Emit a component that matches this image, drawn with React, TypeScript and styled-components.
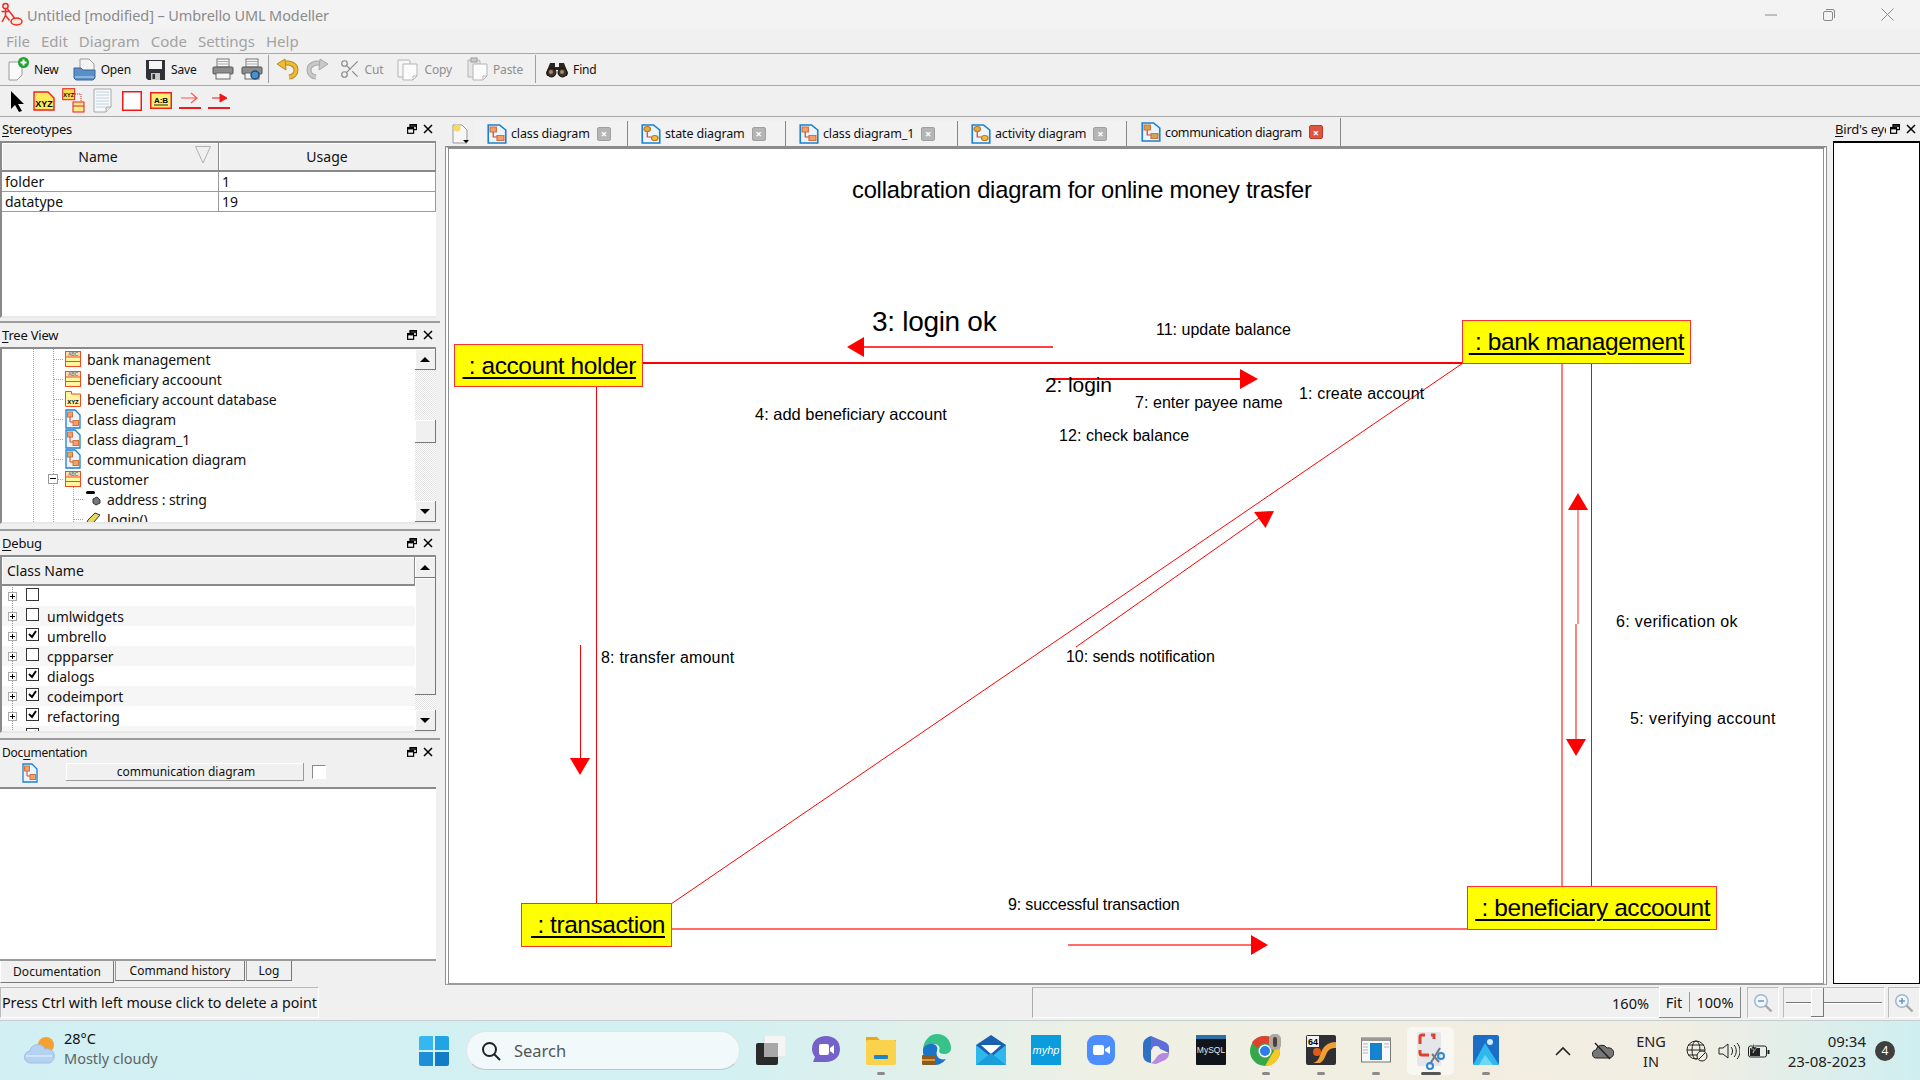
import React, { ReactNode } from "react";
import styled, { createGlobalStyle } from "styled-components";
import { Scissors } from "lucide-react";

const UI_FONT = `"Noto Sans", "Liberation Sans", sans-serif`;
const CANVAS_FONT = `"Liberation Sans", Arial, sans-serif`;

// page coordinates of the canvas' top left corner, the diagram below is noted in page pixels
const OX = 449;
const OY = 149;

const GlobalStyle = createGlobalStyle`
  html, body { margin: 0; padding: 0; background: #f0f0f0; }
  * { box-sizing: border-box; }
`;

const Screen = styled.div`
  width: 1920px;
  height: 1080px;
  overflow: hidden;
  display: flex;
  flex-direction: column;
  font-family: ${UI_FONT};
  font-size: 14px;
  color: #111;
  background: #f0f0f0;
`;

/* ---- window chrome ---- */

const TitleBar = styled.div`
  height: 29px;
  display: flex;
  align-items: center;
  padding-left: 1px;
  background: #f3f3f3;
  color: #8b8b8b;
  font-size: 14.5px;
  letter-spacing: -0.1px;
`;

const TitleText = styled.span`
  margin-left: 4px;
`;

const WindowButtons = styled.div`
  margin-left: auto;
  padding-right: 4px;
  display: flex;
  color: #8a8a8a;
`;

const WindowButton = styled.div`
  width: 58px;
  height: 29px;
  display: flex;
  align-items: center;
  justify-content: center;
`;

const MenuBar = styled.div`
  height: 25px;
  display: flex;
  align-items: center;
  padding-left: 6px;
  gap: 11px;
  border-bottom: 1px solid #a8a8a8;
  color: #a2a2a2;
  font-size: 15px;
`;

const ToolbarRow = styled.div`
  height: 32px;
  display: flex;
  align-items: center;
  padding-left: 8px;
  border-bottom: 1px solid #a8a8a8;
`;

const ToolButton = styled.div<{ $gap?: number; $off?: boolean; $inset?: number; $iconGap?: number }>`
  display: flex;
  align-items: center;
  gap: ${(p) => p.$iconGap ?? 5}px;
  margin-left: ${(p) => p.$inset ?? 0}px;
  margin-right: ${(p) => p.$gap ?? 14}px;
  font-size: 12px;
  letter-spacing: -0.15px;
  color: ${(p) => (p.$off ? "#8f8f8f" : "#111")};
`;

const ToolSep = styled.div`
  width: 1px;
  height: 28px;
  background: #a0a0a0;
  margin: 0 7px 0 0;
`;

const ModeIcon = styled.div<{ $w: number }>`
  width: ${(p) => p.$w}px;
  height: 24px;
  display: flex;
  align-items: center;
  justify-content: center;
  flex: none;
`;

/* ---- workspace ---- */

const Workspace = styled.div`
  height: 870px;
  display: flex;
`;

const LeftColumn = styled.div`
  width: 440px;
  flex: none;
  display: flex;
  flex-direction: column;
`;

const Panel = styled.section<{ $h: number; $pad?: number }>`
  height: ${(p) => p.$h}px;
  padding-bottom: ${(p) => p.$pad ?? 0}px;
  flex: none;
  display: flex;
  flex-direction: column;
  overflow: hidden;
`;

const PanelTitle = styled.div<{ $size?: number }>`
  height: 24px;
  flex: none;
  display: flex;
  align-items: center;
  padding: 0 7px 0 2px;
  font-size: ${(p) => p.$size ?? 13}px;
  letter-spacing: -0.2px;
  color: #111;
  u { text-underline-offset: 2px; }
`;

const PanelButtons = styled.div`
  margin-left: auto;
  display: flex;
  align-items: center;
  gap: 6px;
`;

const PanelFrame = styled.div`
  flex: 1;
  min-height: 0;
  margin-right: 4px;
  display: flex;
  background: #fff;
  border-top: 2px solid #8a8a8a;
  border-left: 2px solid #8a8a8a;
  border-bottom: 2px solid #e8e8e8;
  overflow: hidden;
  position: relative;
`;

const Sep = styled.div`
  height: 2px;
  flex: none;
  background: #9c9c9c;
`;

const HeaderGrid = styled.div`
  display: grid;
  grid-template-columns: 217px 1fr;
  width: 100%;
  align-content: start;
`;

const HeaderCell = styled.div<{ $sorted?: boolean }>`
  height: 29px;
  display: flex;
  align-items: center;
  justify-content: center;
  padding-right: ${(p) => (p.$sorted ? 24 : 0)}px;
  position: relative;
  background: #f0f0f0;
  border-right: 1px solid #8a8a8a;
  border-bottom: 2px solid #8a8a8a;
  box-shadow: inset 1px 1px 0 #fff;
  font-size: 14px;
`;

const SortMark = styled.svg`
  position: absolute;
  right: 7px;
  top: 3px;
`;

const DataCell = styled.div`
  height: 20px;
  padding-left: 3px;
  display: flex;
  align-items: center;
  border-right: 1px solid #9a9a9a;
  border-bottom: 1px solid #9a9a9a;
  font-size: 14px;
`;

const ScrollBar = styled.div`
  width: 21px;
  flex: none;
  display: flex;
  flex-direction: column;
  background: repeating-conic-gradient(#fff 0 25%, #e2e2e2 0 50%) 0 0 / 2px 2px;
`;

const ScrollButton = styled.div<{ $down?: boolean }>`
  height: 21px;
  flex: none;
  display: flex;
  align-items: center;
  justify-content: center;
  background: #f0f0f0;
  border-right: 1px solid #777;
  border-bottom: 1px solid #777;
  box-shadow: inset 1px 1px 0 #fff;
  &::before {
    content: "";
    border-left: 5px solid transparent;
    border-right: 5px solid transparent;
    ${(p) => (p.$down ? "border-top: 5px solid #000;" : "border-bottom: 5px solid #000;")}
  }
`;

const ScrollThumb = styled.div<{ $h: number }>`
  height: ${(p) => p.$h}px;
  flex: none;
  background: #f0f0f0;
  border-right: 1px solid #777;
  border-bottom: 1px solid #777;
  box-shadow: inset 1px 1px 0 #fff;
`;

const ScrollGap = styled.div<{ $h?: number }>`
  ${(p) => (p.$h !== undefined ? `height: ${p.$h}px; flex: none;` : "flex: 1;")}
`;

const TreeBody = styled.div`
  flex: 1;
  min-width: 0;
  overflow: hidden;
  position: relative;
`;

const VGuide = styled.div<{ $x: number; $top?: number }>`
  position: absolute;
  left: ${(p) => p.$x}px;
  top: ${(p) => p.$top ?? 0}px;
  bottom: 0;
  border-left: 1px dotted #a0a0a0;
`;

const TreeRow = styled.div<{ $depth: number }>`
  height: 20px;
  display: flex;
  align-items: center;
  gap: 6px;
  padding-left: ${(p) => 63 + p.$depth * 20}px;
  font-size: 14px;
  letter-spacing: -0.1px;
  white-space: nowrap;
  position: relative;
  &::before {
    content: "";
    position: absolute;
    left: ${(p) => 51 + p.$depth * 20}px;
    top: 10px;
    width: 10px;
    border-top: 1px dotted #a0a0a0;
  }
`;

const Expander = styled.div`
  position: absolute;
  width: 10px;
  height: 10px;
  left: 46px;
  top: 5px;
  background: #fff;
  border: 1px solid #999;
  z-index: 1;
  &::after {
    content: "";
    position: absolute;
    left: 1px;
    right: 1px;
    top: 3px;
    border-top: 1px solid #000;
  }
`;

const ClassColumn = styled.div`
  flex: 1;
  min-width: 0;
  display: flex;
  flex-direction: column;
  overflow: hidden;
`;

const ClassHeader = styled.div`
  height: 29px;
  flex: none;
  display: flex;
  align-items: center;
  padding-left: 5px;
  background: #f0f0f0;
  border-right: 1px solid #8a8a8a;
  border-bottom: 2px solid #8a8a8a;
  box-shadow: inset 1px 1px 0 #fff;
  font-size: 14px;
`;

const ClassRow = styled.div<{ $shade: boolean }>`
  height: 20px;
  flex: none;
  position: relative;
  display: flex;
  align-items: center;
  padding-left: 24px;
  gap: 8px;
  background: ${(p) => (p.$shade ? "#f6f6f6" : "#fff")};
  font-size: 14px;
  &::before {
    content: "";
    position: absolute;
    left: 10px;
    top: -1px;
    bottom: 0;
    border-left: 1px dotted #999;
  }
`;

const PlusBox = styled.div`
  position: absolute;
  left: 6px;
  top: 6px;
  width: 9px;
  height: 9px;
  background: #fff;
  border: 1px solid #aaa;
  z-index: 1;
  &::before, &::after {
    content: "";
    position: absolute;
    background: #000;
  }
  &::before { left: 1px; right: 1px; top: 3px; height: 1px; }
  &::after { top: 1px; bottom: 1px; left: 3px; width: 1px; }
`;

const CheckBox = styled.div`
  width: 13px;
  height: 13px;
  flex: none;
  background: #fff;
  border: 1px solid #333;
  margin-top: -3px;
  display: flex;
  align-items: center;
  justify-content: center;
`;

const DocHeader = styled.div`
  height: 24px;
  margin-top: -1px;
  flex: none;
  display: flex;
  align-items: flex-start;
  padding-left: 22px;
`;

const DocName = styled.div`
  width: 238px;
  height: 18px;
  margin-left: 28px;
  padding-left: 3px;
  display: flex;
  align-items: center;
  justify-content: center;
  font-size: 12px;
  background: #f0f0f0;
  border-right: 1px solid #999;
  border-bottom: 1px solid #999;
  box-shadow: inset 1px 1px 0 #fff;
`;

const DocCheck = styled.div`
  width: 14px;
  height: 14px;
  margin: 2px 0 0 8px;
  background: #fff;
  border: 1px solid #888;
  border-right-color: #fff;
  border-bottom-color: #fff;
`;

const DocArea = styled.div`
  height: 174px;
  flex: none;
  margin-right: 4px;
  background: #fff;
  border-top: 2px solid #8a8a8a;
  border-bottom: 2px solid #9a9a9a;
`;

const BottomTabs = styled.div`
  height: 23px;
  flex: none;
  display: flex;
`;

const BottomTab = styled.div<{ $w: number; $active?: boolean }>`
  width: ${(p) => p.$w}px;
  height: ${(p) => (p.$active ? 22 : 20)}px;
  margin-right: 1px;
  display: flex;
  align-items: center;
  justify-content: center;
  font-size: 12px;
  background: #f0f0f0;
  border-right: 1px solid #777;
  border-bottom: 1px solid #777;
  border-left: 1px solid ${(p) => (p.$active ? "#fff" : "#999")};
`;

const CenterColumn = styled.div`
  width: 1386px;
  margin-left: 4px;
  flex: none;
  display: flex;
  flex-direction: column;
`;

const TabStrip = styled.div`
  height: 29px;
  flex: none;
  display: flex;
  align-items: flex-end;
  padding-left: 3px;
`;

const NewTab = styled.div`
  width: 28px;
  height: 25px;
  flex: none;
  display: flex;
  align-items: center;
  justify-content: center;
`;

const Tab = styled.div<{ $w: number; $active?: boolean }>`
  width: ${(p) => p.$w}px;
  height: ${(p) => (p.$active ? 28 : 25)}px;
  flex: none;
  display: flex;
  align-items: center;
  padding-left: ${(p) => (p.$active ? 13 : 12)}px;
  gap: 4px;
  font-size: 12.5px;
  letter-spacing: ${(p) => (p.$active ? -0.35 : -0.15)}px;
  white-space: nowrap;
  background: ${(p) => (p.$active ? "#f0f0f0" : "#f2f2f2")};
  border-right: 1px solid #888;
  margin-right: 1px;
`;

const TabClose = styled.div<{ $active?: boolean }>`
  width: 14px;
  height: 14px;
  flex: none;
  margin-left: 3px;
  border-radius: 2px;
  display: flex;
  align-items: center;
  justify-content: center;
  color: #fff;
  font-size: 11px;
  font-weight: 700;
  line-height: 1;
  background: ${(p) => (p.$active ? "#e0533f" : "#b5b5b5")};
  border: 1px solid ${(p) => (p.$active ? "#c03c2a" : "#a0a0a0")};
`;

const CanvasFrame = styled.div`
  flex: 1;
  min-height: 0;
  margin-bottom: 2px;
  margin-left: 1px;
  margin-right: 3px;
  border-top: 3px solid #8c8c8c;
  border-left: 4px double #8f8f8f;
  border-right: 4px double #8f8f8f;
  border-bottom: 2px solid #9a9a9a;
  background: #fff;
  position: relative;
  overflow: hidden;
`;

const Wires = styled.svg`
  position: absolute;
  left: 0;
  top: 0;
`;

const DiagramObject = styled.div<{ $x: number; $y: number; $w: number; $h: number; $size: number; $ls: number }>`
  position: absolute;
  left: ${(p) => p.$x - OX}px;
  top: ${(p) => p.$y - OY}px;
  width: ${(p) => p.$w}px;
  height: ${(p) => p.$h}px;
  display: flex;
  align-items: center;
  justify-content: flex-end;
  padding-right: 6px;
  background: #ffff00;
  border: 1.5px solid #ff3030;
  font-family: ${CANVAS_FONT};
  font-size: ${(p) => p.$size}px;
  letter-spacing: ${(p) => p.$ls}px;
  color: #000;
  white-space: pre;
  text-decoration: underline;
  text-decoration-thickness: 2px;
  text-underline-offset: 3px;
`;

const DiagramLabel = styled.div<{ $x: number; $y: number; $size: number; $ls: number }>`
  position: absolute;
  left: ${(p) => p.$x - OX}px;
  top: ${(p) => p.$y - OY}px;
  transform: translateY(-50%);
  font-family: ${CANVAS_FONT};
  font-size: ${(p) => p.$size}px;
  letter-spacing: ${(p) => p.$ls}px;
  color: #000;
  white-space: nowrap;
`;

const BirdColumn = styled.div`
  flex: 1;
  min-width: 0;
  margin-left: 3px;
  display: flex;
  flex-direction: column;
`;

const BirdTitle = styled(PanelTitle)`
  padding: 0 4px 0 2px;
`;

const BirdName = styled.span`
  width: 51px;
  overflow: hidden;
  white-space: nowrap;
`;

const BirdBody = styled.div`
  flex: 1;
  background: #fff;
  border: 1px solid #000;
  border-top-width: 2px;
  margin-bottom: 3px;
`;

const StatusRow = styled.div`
  height: 33px;
  display: flex;
  align-items: stretch;
  padding-bottom: 2px;
`;

const StatusMessage = styled.div`
  width: 319px;
  flex: none;
  display: flex;
  align-items: center;
  padding-left: 1px;
  font-size: 14.3px;
  letter-spacing: -0.05px;
  white-space: nowrap;
  border-left: 1px solid #bbb;
  border-top: 1px solid #bbb;
  border-right: 1px solid #fff;
  border-bottom: 1px solid #fff;
`;

const ZoomBox = styled.div`
  flex: 1;
  min-width: 0;
  margin-left: 713px;
  display: flex;
  align-items: center;
  justify-content: flex-end;
  padding-right: 10px;
  font-size: 14.5px;
  border-left: 1px solid #aaa;
  border-top: 1px solid #bbb;
  border-bottom: 1px solid #fff;
`;

const ZoomButtons = styled.div`
  width: 82px;
  flex: none;
  display: flex;
  align-items: center;
  font-size: 14.5px;
  background: #f0f0f0;
  border-right: 1px solid #888;
  border-bottom: 1px solid #888;
  box-shadow: inset 1px 1px 0 #fff;
`;

const ZoomButton = styled.div<{ $w: number; $line?: boolean }>`
  width: ${(p) => p.$w}px;
  height: 20px;
  display: flex;
  align-items: center;
  justify-content: center;
  ${(p) => (p.$line ? "border-right: 1px solid #999;" : "")}
`;

const ZoomIconCell = styled.div<{ $inset: number }>`
  width: 32px;
  margin-left: ${(p) => p.$inset}px;
  flex: none;
  display: flex;
  align-items: center;
  justify-content: center;
  border-left: 1px solid #bbb;
  border-top: 1px solid #bbb;
  border-right: 1px solid #fff;
  border-bottom: 1px solid #fff;
`;

const SliderCell = styled.div`
  width: 102px;
  margin-left: 4px;
  flex: none;
  display: flex;
  align-items: center;
  position: relative;
  padding: 0 2px;
  border-left: 1px solid #bbb;
  border-top: 1px solid #bbb;
  border-right: 1px solid #fff;
  border-bottom: 1px solid #fff;
`;

const SliderLine = styled.div`
  width: 100%;
  height: 2px;
  background: #777;
  border-bottom: 1px solid #fff;
`;

const SliderThumb = styled.div`
  position: absolute;
  left: 27px;
  top: 0;
  bottom: 0;
  width: 13px;
  background: #f0f0f0;
  border-right: 1px solid #777;
  border-bottom: 1px solid #777;
  box-shadow: inset 1px 1px 0 #fff;
`;

/* ---- windows taskbar ---- */

const Taskbar = styled.div`
  height: 60px;
  flex: none;
  display: flex;
  align-items: center;
  border-top: 1px solid #c6cfcf;
  background: linear-gradient(90deg, #d2f0f3 0%, #d3f0f2 38%, #eff0e4 58%, #f3ede1 78%, #f1eee3 88%, #cfeef1 100%);
`;

const Weather = styled.div`
  width: 418px;
  flex: none;
  display: flex;
  align-items: center;
  padding-left: 24px;
  gap: 8px;
`;

const WeatherText = styled.div`
  display: flex;
  flex-direction: column;
  padding-bottom: 5px;
  font-size: 14.5px;
  line-height: 20px;
  div + div { color: #5d6466; }
`;

const StartCell = styled.div`
  width: 32px;
  height: 32px;
  flex: none;
`;

const SearchBox = styled.div`
  width: 274px;
  height: 39px;
  margin: 0 3px 0 16px;
  flex: none;
  display: flex;
  align-items: center;
  gap: 13px;
  padding-left: 14px;
  border-radius: 20px;
  background: #f1f9fa;
  border: 1px solid #dfe6e6;
  border-bottom-color: #bcc6c6;
  color: #555;
  font-size: 16.5px;
`;

const TaskCell = styled.div<{ $active?: boolean; $dot?: boolean }>`
  width: 55px;
  height: 48px;
  flex: none;
  position: relative;
  display: flex;
  align-items: center;
  justify-content: center;
  padding-bottom: 2px;
  border-radius: 5px;
  &::before {
    content: "";
    position: absolute;
    inset: 0 4px;
    border-radius: 5px;
    background: ${(p) => (p.$active ? "rgba(255,255,255,.55)" : "transparent")};
  }
  &::after {
    content: "";
    display: ${(p) => (p.$dot || p.$active ? "block" : "none")};
    position: absolute;
    bottom: 0;
    left: 50%;
    transform: translateX(-50%);
    width: ${(p) => (p.$active ? 20 : 8)}px;
    height: 3px;
    border-radius: 2px;
    background: ${(p) => (p.$active ? "#555" : "#8a8a8a")};
  }
  svg { position: relative; }
`;

const Tray = styled.div`
  margin-left: auto;
  display: flex;
  align-items: center;
  padding-right: 25px;
  color: #222;
  font-size: 14.5px;
`;

const TrayIcon = styled.div<{ $w: number }>`
  width: ${(p) => p.$w}px;
  height: 28px;
  flex: none;
  display: flex;
  align-items: center;
  justify-content: center;
`;

const TrayStack = styled.div<{ $w: number; $align: string; $size?: number }>`
  width: ${(p) => p.$w}px;
  flex: none;
  display: flex;
  flex-direction: column;
  align-items: ${(p) => p.$align};
  font-size: ${(p) => p.$size ?? 14.5}px;
  line-height: 20px;
`;

const Badge = styled.div`
  width: 20px;
  height: 20px;
  margin-left: 9px;
  border-radius: 50%;
  background: #3f3f3f;
  color: #fff;
  font-size: 12px;
  display: flex;
  align-items: center;
  justify-content: center;
`;

const FixedSvg = styled.svg`
  flex: none;
`;

/* ---- drawn icons ---- */

const UmbrelloLogo = () => (
  <svg width="22" height="25" viewBox="0 0 22 25" fill="none" stroke="#f4281e" strokeWidth="1.500">
    <circle cx="4.500" cy="4" r="2.600" />
    <path d="M4.500 6.600v7M.5 9.500h8M4.500 13.500L1 20M4.500 13.500l4 5M6.500 7l7 9" />
    <ellipse cx="15.500" cy="19.500" rx="5.500" ry="3.500" fill="#ffe9d8" />
  </svg>
);

const RestoreDock = () => (
  <svg width="10" height="10" viewBox="0 0 10 10" fill="none" stroke="#000" strokeWidth="1.2">
    <rect x="3" y="0.600" width="6.400" height="5" />
    <path d="M3 2h6.400" strokeWidth="1.600" />
    <rect x="0.600" y="3.500" width="6" height="5.800" fill="#f0f0f0" />
    <path d="M.6 4.600h6" strokeWidth="1.600" />
  </svg>
);

const CloseDock = () => (
  <svg width="10" height="10" viewBox="0 0 10 10" stroke="#000" strokeWidth="1.5">
    <path d="M1 1l8 8M9 1l-8 8" />
  </svg>
);

const NewIcon = () => (
  <svg width="21" height="24" viewBox="0 0 21 24">
    <path d="M1 5h13v13l-5 5H1z" fill="#fafafa" stroke="#9a9a9a" />
    <circle cx="15.500" cy="5.500" r="5.500" fill="#22a032" />
    <path d="M15.500 2.500v6M12.500 5.500h6" stroke="#fff" strokeWidth="2" />
  </svg>
);

const OpenIcon = () => (
  <svg width="23" height="23" viewBox="0 0 23 23">
    <path d="M7 1h9l5 5v10H7z" fill="#f4f4f4" stroke="#9a9a9a" />
    <path d="M1 10h7l2 2h12v8l-2 2H3l-2-2z" fill="#5b8fc8" stroke="#3a6595" />
    <path d="M2 18h19v2H2z" fill="#8db6df" />
  </svg>
);

const SaveIcon = () => (
  <svg width="21" height="23" viewBox="0 0 21 23">
    <path d="M1 2h19v20H3l-2-2z" fill="#2e3238" />
    <rect x="4" y="3" width="13" height="8" fill="#f5f5f5" />
    <rect x="6" y="15" width="9" height="7" fill="#c8c8c8" />
    <rect x="7.500" y="16" width="2.500" height="5" fill="#333" />
  </svg>
);

const PrintIcon = ({ preview }: { preview?: boolean }) => (
  <svg width="22" height="22" viewBox="0 0 22 22">
    <rect x="5" y="1" width="12" height="8" fill="#f8f8f8" stroke="#777" />
    <path d="M6 3.500h10M6 6h10" stroke="#aaa" />
    <rect x="1" y="9" width="20" height="7" rx="1" fill="#8c8c8c" stroke="#555" />
    <rect x="4" y="15" width="14" height="6" fill="#f4f4f4" stroke="#666" />
    {preview && <circle cx="14" cy="17" r="4" fill="#4d91c9" stroke="#1d4f7c" strokeWidth="1.500" />}
  </svg>
);

const TurnIcon = ({ color, edge, flip }: { color: string; edge: string; flip?: boolean }) => (
  <svg width="23" height="22" viewBox="0 0 23 22">
    <g transform={flip ? "translate(23 0) scale(-1 1)" : undefined}>
      <path d="M7 5.500c7-1.500 13 1 13 6.500 0 4-3 6.500-7 7" fill="none" stroke={edge} strokeWidth="5" />
      <path d="M7 5.500c7-1.500 13 1 13 6.500 0 4-3 6.500-7 7" fill="none" stroke={color} strokeWidth="3" />
      <path d="M1 6l8-5 1 11z" fill={color} stroke={edge} />
    </g>
  </svg>
);

const PagesIcon = ({ clip }: { clip?: boolean }) => (
  <svg width="22" height="25" viewBox="0 0 22 25" fill="#fbfbfb" stroke="#b5b5b5">
    <path d="M1 3h11l1 1v16H1z" fill={clip ? "#e6e6e6" : "#f6f6f6"} />
    {clip && <rect x="4" y="1" width="6" height="4" fill="#ccc" stroke="#999" />}
    <path d="M6 7h14v12l-4 4H6z" />
    <path d="M16 23v-4h4" fill="none" />
  </svg>
);

const BinocularsIcon = () => (
  <svg width="22" height="17" viewBox="0 0 22 17">
    <path d="M4 2h5v4h4V2h5l4 10-1 3H13V9H9v6H1l-1-3z" fill="#2c2620" />
    <circle cx="5.500" cy="11.500" r="4.500" fill="#3d3229" stroke="#15110d" />
    <circle cx="16.500" cy="11.500" r="4.500" fill="#3d3229" stroke="#15110d" />
    <circle cx="5" cy="11" r="2" fill="#a88a60" />
    <circle cx="16" cy="11" r="2" fill="#a88a60" />
  </svg>
);

const ArrowCursor = () => (
  <svg width="15" height="22" viewBox="0 0 15 22">
    <path d="M1 1l13 13-6 0 4 7-3 1-4-7-4 4z" fill="#000" />
  </svg>
);

const ObjectIcon = () => (
  <svg width="22" height="20" viewBox="0 0 22 20">
    <path d="M1 1h14l6 6v12H1z" fill="#ffe95c" stroke="#ee2020" strokeWidth="1.400" />
    <text x="11" y="16" fontFamily={CANVAS_FONT} fontWeight="700" fontSize="9" textAnchor="middle">XYZ</text>
  </svg>
);

const ComponentIcon = () => (
  <svg width="23" height="25" viewBox="0 0 23 25">
    <rect x="0.700" y="0.700" width="12" height="11" fill="#ffd84a" stroke="#e42020" />
    <text x="6.700" y="9" fontFamily={CANVAS_FONT} fontWeight="700" fontSize="5.500" textAnchor="middle">XYZ</text>
    <path d="M13 6h6v8" fill="none" stroke="#e42020" strokeDasharray="1 1" />
    <rect x="11" y="14" width="11" height="10" fill="#ffe888" stroke="#e42020" />
    <path d="M11 18h11" stroke="#e42020" />
  </svg>
);

const NoteIcon = () => (
  <svg width="19" height="25" viewBox="0 0 19 25" fill="none">
    <path d="M1 1h17v18l-5 5H1z" fill="#f6f9fc" stroke="#a8a8a8" />
    <path d="M3 4h13M3 7h13M3 10h13M3 13h13M3 16h13M3 19h9" stroke="#c4d0de" />
    <path d="M13 24v-5h5" fill="#e8e8e8" stroke="#a8a8a8" />
  </svg>
);

const BoxIcon = () => (
  <svg width="20" height="20" viewBox="0 0 20 20">
    <rect x="0.750" y="0.750" width="18.500" height="18.500" fill="#fff" stroke="#f01818" strokeWidth="1.500" />
  </svg>
);

const RoleIcon = () => (
  <svg width="22" height="17" viewBox="0 0 22 17">
    <rect x="0.750" y="0.750" width="20.500" height="15.500" fill="#ffee70" stroke="#ee2020" strokeWidth="1.500" />
    <text x="11" y="11" fontFamily={CANVAS_FONT} fontWeight="700" fontSize="8" textAnchor="middle">A:B</text>
    <path d="M4 13h14" stroke="#222" />
  </svg>
);

const MessageIcon = ({ solid }: { solid?: boolean }) => (
  <svg width="22" height="18" viewBox="0 0 22 18">
    {solid ? (
      <path d="M4 6h8V2l7 4-7 4V6" fill="#f01818" stroke="#f01818" />
    ) : (
      <path d="M2 6h16M12 1l6 5-6 5" fill="none" stroke="#f55" strokeWidth="1.200" />
    )}
    <rect x="0" y="15" width="22" height="2" fill="#f01818" />
  </svg>
);

const DiagramIcon = ({ accent = "#f0a070", round, w = 16 }: { accent?: string; round?: boolean; w?: number }) => (
  <FixedSvg width={w} height={20} viewBox="0 0 16 20" preserveAspectRatio="none">
    <path d="M1 1h9l5 5v13H1z" fill="#eaf5ff" stroke="#1d80d0" strokeWidth="1.300" />
    {round ? <circle cx="5" cy="5" r="2.600" fill="#dcb040" stroke="#c07a20" /> : <rect x="2.500" y="3" width="5" height="5" fill={accent} stroke="#d8703a" />}
    <path d="M5 8v5h3" fill="none" stroke="#e04020" />
    {round ? <circle cx="11" cy="14" r="2.600" fill="#f0c040" stroke="#c07a20" /> : <rect x="8" y="11.500" width="5.500" height="5" fill={accent} stroke="#d8703a" />}
  </FixedSvg>
);

const ClassIcon = () => (
  <FixedSvg width="16" height="16" viewBox="0 0 16 16">
    <rect x="0.500" y="0.500" width="15" height="15" fill="#fff7a0" stroke="#f04c20" />
    <rect x="1" y="1" width="14" height="5" fill="#ffe0b8" />
    <path d="M0 6h16M0 10.500h16" stroke="#f04c20" />
    <text x="8" y="5" fontFamily={CANVAS_FONT} fontSize="4.800" fontWeight="700" fill="#777" textAnchor="middle">ABC</text>
  </FixedSvg>
);

const PackageIcon = () => (
  <FixedSvg width="16" height="16" viewBox="0 0 16 16">
    <path d="M.5 3V.5h6V3h9v12.500H.5z" fill="#fff2a0" stroke="#f04c20" />
    <text x="8" y="13" fontFamily={CANVAS_FONT} fontSize="6" fontWeight="700" textAnchor="middle">XYZ</text>
  </FixedSvg>
);

const AttributeIcon = () => (
  <FixedSvg width="16" height="16" viewBox="0 0 16 16">
    <rect x="1" y="0" width="9" height="3" rx="1.500" fill="#000" />
    <path d="M8 8l4-2 3 3v3l-4 2-3-2z" fill="#777" stroke="#333" />
  </FixedSvg>
);

const MethodIcon = () => (
  <FixedSvg width="16" height="14" viewBox="0 0 16 14">
    <path d="M1 12l2-4 7-7 5 2-7 8-4 2z" fill="#e8d860" stroke="#333" />
  </FixedSvg>
);

const TabDocIcon = () => (
  <svg width="18" height="20" viewBox="0 0 18 20">
    <path d="M1 1h9l5 5v13H1z" fill="#f6f6f6" stroke="#999" />
    <circle cx="5" cy="4" r="3.500" fill="#f5dc60" />
    <path d="M11 16h6l-3 3z" fill="#000" />
  </svg>
);

const MagnifierIcon = ({ plus }: { plus?: boolean }) => (
  <svg width="20" height="20" viewBox="0 0 20 20" fill="none">
    <circle cx="8" cy="8" r="6.300" fill="#eef5fb" stroke="#9db8d2" strokeWidth="1.500" />
    <path d="M5 8h6" stroke="#6e8eaf" strokeWidth="1.400" />
    {plus && <path d="M8 5v6" stroke="#6e8eaf" strokeWidth="1.400" />}
    <path d="M12.500 12.500l6 6" stroke="#a8a8a8" strokeWidth="2.400" />
  </svg>
);

const CloudSun = () => (
  <svg width="32" height="30" viewBox="0 0 32 30">
    <circle cx="22" cy="9" r="8" fill="#f5a030" />
    <path d="M7 27a6 6 0 0 1-1-12 8 8 0 0 1 15-2 7 7 0 0 1 4 14z" fill="#b6d2f2" stroke="#9cbde6" />
    <path d="M2 20h26" stroke="#e3eefb" strokeWidth="1.200" />
  </svg>
);

const StartLogo = () => (
  <svg width="32" height="32" viewBox="0 0 32 32">
    <path d="M1 3a2 2 0 0 1 2-2h12v14H1z" fill="#35b7ef" />
    <path d="M17 1h12a2 2 0 0 1 2 2v12H17z" fill="#20a4e6" />
    <path d="M1 17h14v14H3a2 2 0 0 1-2-2z" fill="#1c8fd8" />
    <path d="M17 17h14v12a2 2 0 0 1-2 2H17z" fill="#117cc8" />
  </svg>
);

const SearchGlass = () => (
  <svg width="20" height="20" viewBox="0 0 20 20" fill="none" stroke="#222" strokeWidth="2">
    <circle cx="8.500" cy="8.500" r="6.500" />
    <path d="M13 13l6 6" />
  </svg>
);

const TASK_ICONS: { id: string; dot?: boolean; active?: boolean; art: ReactNode }[] = [
  {
    id: "taskview",
    art: (
      <svg width="30" height="30" viewBox="0 0 30 30">
        <rect x="8" y="0" width="22" height="22" rx="2" fill="#f5f5f5" stroke="#e0e0e0" />
        <rect x="0" y="8" width="22" height="22" rx="2" fill="#2a2a2a" />
        <rect x="8" y="8" width="14" height="14" fill="#a8a8a8" />
      </svg>
    ),
  },
  {
    id: "chat",
    art: (
      <svg width="30" height="30" viewBox="0 0 30 30">
        <path d="M15 1c8 0 14 5 14 13s-6 13-14 13H2l2-5C2 19 1 17 1 14 1 6 7 1 15 1z" fill="#7462c8" />
        <rect x="8" y="9" width="10" height="11" rx="2" fill="#fff" />
        <path d="M19 13l4-3v9l-4-3z" fill="#fff" />
      </svg>
    ),
  },
  {
    id: "folder",
    dot: true,
    art: (
      <svg width="30" height="30" viewBox="0 0 30 30">
        <path d="M0 2h11l3 3h16v3H0z" fill="#e8a818" />
        <rect x="0" y="5" width="30" height="25" rx="2" fill="#fbd24c" />
        <rect x="8" y="20" width="14" height="4" rx="1" fill="#1a86cc" />
      </svg>
    ),
  },
  {
    id: "edge",
    art: (
      <svg width="30" height="32" viewBox="0 0 30 32">
        <path d="M2 15C3 6 9 0 16 0c8 0 14 6 14 14 0 4-3 6-7 6-3 0-5-1-5-3 2-4-1-7-5-7-5 0-9 2-11 5z" fill="#37c28a" />
        <path d="M2 15c1-3 6-6 10-5 4 1 5 4 4 7-2 5 3 10 9 8-3 4-7 6-11 6C7 31 1 24 2 15z" fill="#1a74c8" />
        <rect x="1" y="21" width="13" height="10" rx="1" fill="#8a5a20" />
        <rect x="1" y="25" width="13" height="2" fill="#d89a3a" />
      </svg>
    ),
  },
  {
    id: "mail",
    art: (
      <svg width="30" height="30" viewBox="0 0 30 30">
        <path d="M0 10L15 0l15 10v20H0z" fill="#1a5fb0" />
        <path d="M5 10h20l-10 9z" fill="#fff" />
        <path d="M0 10l15 12 15-12v20H0z" fill="#2fb8ee" />
        <path d="M0 30l15-12 15 12z" fill="#1a9edb" />
      </svg>
    ),
  },
  {
    id: "myhp",
    art: (
      <svg width="30" height="30" viewBox="0 0 30 30">
        <rect width="30" height="30" fill="#0a9cdc" />
        <text x="15" y="19" fill="#fff" fontSize="11" fontStyle="italic" fontFamily={CANVAS_FONT} textAnchor="middle">myhp</text>
      </svg>
    ),
  },
  {
    id: "zoom",
    art: (
      <svg width="28" height="30" viewBox="0 0 28 30">
        <rect width="28" height="30" rx="9" fill="#4c8dff" />
        <rect x="6" y="10" width="11" height="10" rx="2" fill="#fff" />
        <path d="M18 14l5-3v8l-5-3z" fill="#fff" />
      </svg>
    ),
  },
  {
    id: "copilot",
    art: (
      <svg width="28" height="30" viewBox="0 0 28 30">
        <path d="M9 1l14 6c3 2 4 3 4 6v5L14 12l-5 3z" fill="#5b6fd6" />
        <path d="M9 1C3 3 1 6 1 10v10c0 3 1 5 4 7l4 1v-13z" fill="#2f6fc4" />
        <path d="M27 18c0 3-1 5-4 7l-9 4c-3 0-5-1-5-1 5-2 5-9 12-10z" fill="#b58ae0" />
        <circle cx="14" cy="15" r="4" fill="#f4eee4" />
      </svg>
    ),
  },
  {
    id: "mysql",
    art: (
      <svg width="30" height="30" viewBox="0 0 30 30">
        <rect width="30" height="30" rx="1" fill="#10151c" />
        <rect width="30" height="4" fill="#2c70a8" />
        <text x="15" y="18" fill="#e8e8e8" fontSize="8.500" fontFamily={CANVAS_FONT} textAnchor="middle">MySQL</text>
      </svg>
    ),
  },
  {
    id: "chrome",
    dot: true,
    art: (
      <svg width="31" height="32" viewBox="0 0 31 32">
        <circle cx="15" cy="17" r="15" fill="#36a84a" />
        <path d="M15 2a15 15 0 0 1 13 7.500H15a7 7 0 0 0-7 5L2 8.500A15 15 0 0 1 15 2z" fill="#e0402e" />
        <path d="M28 9.500A15 15 0 0 1 15 32l7-12a7 7 0 0 0 0-10.500z" fill="#f8c824" />
        <circle cx="15" cy="17" r="6.500" fill="#fff" />
        <circle cx="15" cy="17" r="5" fill="#2f7be8" />
        <rect x="19" y="0" width="12" height="16" rx="5" fill="#b0a8a0" />
        <rect x="23" y="3" width="4" height="10" rx="2" fill="#4a4038" />
      </svg>
    ),
  },
  {
    id: "xampp",
    dot: true,
    art: (
      <svg width="30" height="30" viewBox="0 0 30 30">
        <rect width="30" height="30" rx="2" fill="#2f2f33" />
        <rect x="1" y="1" width="12" height="11" fill="#f3f3f3" />
        <text x="7" y="10" fontSize="9" fontWeight="700" fontFamily={CANVAS_FONT} textAnchor="middle">64</text>
        <path d="M30 7c-9 0-13 5-16 13-1 4-3 7-7 8h7c5-3 5-8 8-12 3-3 5-3 8-3z" fill="#f0a030" />
        <circle cx="11" cy="17" r="4" fill="#e05a18" />
      </svg>
    ),
  },
  {
    id: "window",
    dot: true,
    art: (
      <svg width="30" height="30" viewBox="0 0 30 30">
        <rect x="0.500" y="3" width="29" height="24" fill="#f8f8f8" stroke="#777" />
        <rect x="0.500" y="3" width="29" height="3" fill="#999" />
        <rect x="9" y="8" width="12" height="17" fill="#1782d0" />
        <path d="M2 9h5M2 12h5M2 15h5M2 18h5M23 9h5M23 12h5" stroke="#b5b5b5" />
      </svg>
    ),
  },
  {
    id: "snip",
    active: true,
    art: (
      <svg width="30" height="40" viewBox="0 0 30 40">
        <rect x="1" y="2" width="24" height="34" rx="2" fill="#e4e6ea" />
        <path d="M4 14V7a2 2 0 0 1 2-2h3M15 5h3v4M4 20v3a2 2 0 0 0 2 2h7" fill="none" stroke="#e0402e" strokeWidth="3" />
        <path d="M24 18L14 34M16 24l7 8" stroke="#777" strokeWidth="2" />
        <circle cx="25" cy="26" r="3" fill="none" stroke="#2a8ad8" strokeWidth="2" />
        <circle cx="14" cy="36" r="3" fill="none" stroke="#2a8ad8" strokeWidth="2" />
      </svg>
    ),
  },
  {
    id: "photos",
    dot: true,
    art: (
      <svg width="26" height="30" viewBox="0 0 26 30">
        <rect width="26" height="30" rx="2" fill="#1c6dc8" />
        <path d="M0 30L12 8l14 22z" fill="#2fb8ee" />
        <path d="M6 30l6-10 8 10z" fill="#6ed8f4" />
        <circle cx="17" cy="7" r="3" fill="#d0ecfa" />
      </svg>
    ),
  },
];

/* ---- data ---- */

const TREE_ROWS: { text: string; depth: number; icon: ReactNode; open?: boolean }[] = [
  { text: "bank management", depth: 0, icon: <ClassIcon /> },
  { text: "beneficiary accoount", depth: 0, icon: <ClassIcon /> },
  { text: "beneficiary account database", depth: 0, icon: <PackageIcon /> },
  { text: "class diagram", depth: 0, icon: <DiagramIcon /> },
  { text: "class diagram_1", depth: 0, icon: <DiagramIcon /> },
  { text: "communication diagram", depth: 0, icon: <DiagramIcon accent="#d8b060" /> },
  { text: "customer", depth: 0, icon: <ClassIcon />, open: true },
  { text: "address : string", depth: 1, icon: <AttributeIcon /> },
  { text: "login()", depth: 1, icon: <MethodIcon /> },
];

const DEBUG_ROWS = [
  { name: "", on: false },
  { name: "umlwidgets", on: false },
  { name: "umbrello", on: true },
  { name: "cppparser", on: false },
  { name: "dialogs", on: true },
  { name: "codeimport", on: true },
  { name: "refactoring", on: true },
  { name: "codegenerators", on: true },
];

const TABS: { name: string; w: number; icon: ReactNode; active?: boolean }[] = [
  { name: "class diagram", w: 153, icon: <DiagramIcon w={20} /> },
  { name: "state diagram", w: 157, icon: <DiagramIcon w={20} round /> },
  { name: "class diagram_1", w: 171, icon: <DiagramIcon w={20} /> },
  { name: "activity diagram", w: 168, icon: <DiagramIcon w={20} round /> },
  { name: "communication diagram", w: 213, icon: <DiagramIcon w={20} accent="#c8a850" />, active: true },
];

const OBJECTS = [
  { text: " : account holder", x: 454, y: 344, w: 189, h: 43, size: 24.5, ls: -0.45 },
  { text: " : bank management", x: 1462, y: 320, w: 229, h: 44, size: 24.5, ls: -0.45 },
  { text: " : transaction", x: 521, y: 903, w: 151, h: 44, size: 24.5, ls: -0.45 },
  { text: " : beneficiary accoount", x: 1467, y: 886, w: 250, h: 44, size: 24.5, ls: -0.45 },
];

const LABELS = [
  { text: "collabration diagram for online money trasfer", x: 852, y: 190, size: 23.7, ls: -0.2 },
  { text: "3: login ok", x: 872, y: 322, size: 28, ls: -0.3 },
  { text: "2: login", x: 1045, y: 385, size: 21, ls: -0.1 },
  { text: "11: update balance", x: 1156, y: 330, size: 16, ls: 0 },
  { text: "4: add beneficiary account", x: 755, y: 414, size: 16.5, ls: -0.03 },
  { text: "7: enter payee name", x: 1135, y: 403, size: 16, ls: 0.05 },
  { text: "1: create account", x: 1299, y: 394, size: 16, ls: 0.15 },
  { text: "12: check balance", x: 1059, y: 436, size: 16, ls: 0.07 },
  { text: "10: sends notification", x: 1066, y: 657, size: 16, ls: -0.07 },
  { text: "8: transfer amount", x: 601, y: 658, size: 16, ls: 0.2 },
  { text: "6: verification ok", x: 1616, y: 622, size: 16, ls: 0.35 },
  { text: "5: verifying account", x: 1630, y: 719, size: 16, ls: 0.4 },
  { text: "9: successful transaction", x: 1008, y: 905, size: 16, ls: -0.15 },
];

function DiagramWires() {
  return (
    <Wires width="1376" height="834" viewBox={`${OX} ${OY} 1376 834`} fill="none" stroke="#ff0000">
      <path d="M643 363H1462" strokeWidth="2" />
      <path d="M1053 347H860" strokeWidth="1.500" />
      <path d="M847 347l17-10v20z" fill="#ff0000" stroke="none" />
      <path d="M1052 379H1242" strokeWidth="2" />
      <path d="M1258 379l-18-10v20z" fill="#ff0000" stroke="none" />
      <path d="M596.500 387V903" />
      <path d="M580.500 645V760" />
      <path d="M580 775l-10-17h20z" fill="#ff0000" stroke="none" />
      <path d="M671 904L1463 363" />
      <path d="M1076 647L1262 516" />
      <path d="M1254 512l20-1-8.500 17z" fill="#ff0000" stroke="none" />
      <path d="M1562 364V886" stroke="#ff7a7a" strokeWidth="2" />
      <path d="M1591.500 364V886" />
      <path d="M1578 624V508" stroke="#ff6060" strokeWidth="1.400" />
      <path d="M1578 493l-10 17h20z" fill="#ff0000" stroke="none" />
      <path d="M1576 624V742" stroke="#ff3030" strokeWidth="1.200" />
      <path d="M1576 756l-10-17h20z" fill="#ff0000" stroke="none" />
      <path d="M672 929H1467" stroke="#ff6a6a" strokeWidth="2" />
      <path d="M1068 945H1253" stroke="#ff6a6a" strokeWidth="2" />
      <path d="M1268 945l-17-10v20z" fill="#ff0000" stroke="none" />
    </Wires>
  );
}

function DockTitle({ before = "", hot, rest, size }: { before?: string; hot: string; rest: string; size?: number }) {
  return (
    <PanelTitle $size={size}>
      <span>
        {before}
        <u>{hot}</u>
        {rest}
      </span>
      <PanelButtons>
        <RestoreDock />
        <CloseDock />
      </PanelButtons>
    </PanelTitle>
  );
}

export default function App() {
  return (
    <Screen>
      <GlobalStyle />
      <TitleBar>
        <UmbrelloLogo />
        <TitleText>Untitled [modified] – Umbrello UML Modeller</TitleText>
        <WindowButtons>
          <WindowButton>
            <svg width="12" height="2"><path d="M0 1h12" stroke="#8a8a8a" /></svg>
          </WindowButton>
          <WindowButton>
            <svg width="12" height="12" viewBox="0 0 12 12" fill="none" stroke="#8a8a8a">
              <rect x="0.500" y="2.500" width="9" height="9" rx="1.500" />
              <path d="M3 .5h7a1.500 1.500 0 0 1 1.500 1.500v7" />
            </svg>
          </WindowButton>
          <WindowButton>
            <svg width="13" height="13" stroke="#8a8a8a"><path d="M.5.5l12 12M12.500.5l-12 12" /></svg>
          </WindowButton>
        </WindowButtons>
      </TitleBar>

      <MenuBar>
        <span>File</span>
        <span>Edit</span>
        <span>Diagram</span>
        <span>Code</span>
        <span>Settings</span>
        <span>Help</span>
      </MenuBar>

      <ToolbarRow>
        <ToolButton><NewIcon />New</ToolButton>
        <ToolButton $gap={14}><OpenIcon />Open</ToolButton>
        <ToolButton $gap={15}><SaveIcon />Save</ToolButton>
        <ToolButton $gap={7}><PrintIcon /></ToolButton>
        <ToolButton $gap={5}><PrintIcon preview /></ToolButton>
        <ToolSep />
        <ToolButton $gap={7}><TurnIcon color="#efbb34" edge="#b98a1e" /></ToolButton>
        <ToolButton $gap={10}><TurnIcon color="#c9c9c9" edge="#a8a8a8" flip /></ToolButton>
        <ToolButton $off $iconGap={4} $gap={14}><Scissors size={22} color="#8a8a8a" strokeWidth={1.300} />Cut</ToolButton>
        <ToolButton $off $gap={15}><PagesIcon />Copy</ToolButton>
        <ToolButton $off $iconGap={4} $gap={12}><PagesIcon clip />Paste</ToolButton>
        <ToolSep />
        <ToolButton $gap={0} $inset={3} $iconGap={5}><BinocularsIcon />Find</ToolButton>
      </ToolbarRow>

      <ToolbarRow>
        <ModeIcon $w={18}><ArrowCursor /></ModeIcon>
        <ModeIcon $w={36}><ObjectIcon /></ModeIcon>
        <ModeIcon $w={23}><ComponentIcon /></ModeIcon>
        <ModeIcon $w={34}><NoteIcon /></ModeIcon>
        <ModeIcon $w={26}><BoxIcon /></ModeIcon>
        <ModeIcon $w={31}><RoleIcon /></ModeIcon>
        <ModeIcon $w={28}><MessageIcon /></ModeIcon>
        <ModeIcon $w={30}><MessageIcon solid /></ModeIcon>
      </ToolbarRow>

      <Workspace>
        <LeftColumn>
          <Panel $h={204} $pad={3}>
            <DockTitle hot="S" rest="tereotypes" />
            <PanelFrame>
              <HeaderGrid>
                <HeaderCell $sorted>
                  Name
                  <SortMark width="16" height="18" fill="none" stroke="#b0b0b0">
                    <path d="M.5.5h15L8 17z" />
                  </SortMark>
                </HeaderCell>
                <HeaderCell>Usage</HeaderCell>
                <DataCell>folder</DataCell>
                <DataCell>1</DataCell>
                <DataCell>datatype</DataCell>
                <DataCell>19</DataCell>
              </HeaderGrid>
            </PanelFrame>
          </Panel>
          <Sep />
          <Panel $h={206} $pad={5}>
            <DockTitle hot="T" rest="ree View" />
            <PanelFrame>
              <TreeBody>
                <VGuide $x={31} />
                <VGuide $x={51} />
                <VGuide $x={71} $top={130} />
                {TREE_ROWS.map((row) => (
                  <TreeRow key={row.text} $depth={row.depth}>
                    {row.open && <Expander />}
                    {row.icon}
                    <span>{row.text}</span>
                  </TreeRow>
                ))}
              </TreeBody>
              <ScrollBar>
                <ScrollButton />
                <ScrollGap $h={50} />
                <ScrollThumb $h={23} />
                <ScrollGap />
                <ScrollButton $down />
              </ScrollBar>
            </PanelFrame>
          </Panel>
          <Sep />
          <Panel $h={207} $pad={5}>
            <DockTitle hot="D" rest="ebug" />
            <PanelFrame>
              <ClassColumn>
                <ClassHeader>Class Name</ClassHeader>
                {DEBUG_ROWS.map((row, i) => (
                  <ClassRow key={row.name + i} $shade={i % 2 === 1}>
                    <PlusBox />
                    <CheckBox>
                      {row.on && (
                        <svg width="9" height="9" fill="none" stroke="#000" strokeWidth="2">
                          <path d="M1 4l3 3 4-6" />
                        </svg>
                      )}
                    </CheckBox>
                    <span>{row.name}</span>
                  </ClassRow>
                ))}
              </ClassColumn>
              <ScrollBar>
                <ScrollButton />
                <ScrollThumb $h={117} />
                <ScrollGap />
                <ScrollButton $down />
              </ScrollBar>
            </PanelFrame>
          </Panel>
          <Sep />
          <Panel $h={247}>
            <DockTitle before="Doc" hot="u" rest="mentation" size={12} />
            <DocHeader>
              <DiagramIcon />
              <DocName>communication diagram</DocName>
              <DocCheck />
            </DocHeader>
            <DocArea />
            <BottomTabs>
              <BottomTab $w={114} $active>Documentation</BottomTab>
              <BottomTab $w={130}>Command history</BottomTab>
              <BottomTab $w={46}>Log</BottomTab>
            </BottomTabs>
          </Panel>
        </LeftColumn>

        <CenterColumn>
          <TabStrip>
            <NewTab><TabDocIcon /></NewTab>
            {TABS.map((tab) => (
              <Tab key={tab.name} $w={tab.w} $active={tab.active}>
                {tab.icon}
                <span>{tab.name}</span>
                <TabClose $active={tab.active}>×</TabClose>
              </Tab>
            ))}
          </TabStrip>
          <CanvasFrame>
            <DiagramWires />
            {OBJECTS.map((o) => (
              <DiagramObject key={o.text} $x={o.x} $y={o.y} $w={o.w} $h={o.h} $size={o.size} $ls={o.ls}>
                {o.text}
              </DiagramObject>
            ))}
            {LABELS.map((l) => (
              <DiagramLabel key={l.text} $x={l.x} $y={l.y} $size={l.size} $ls={l.ls}>
                {l.text}
              </DiagramLabel>
            ))}
          </CanvasFrame>
        </CenterColumn>

        <BirdColumn>
          <BirdTitle>
            <BirdName><u>B</u>ird's eye</BirdName>
            <PanelButtons>
              <RestoreDock />
              <CloseDock />
            </PanelButtons>
          </BirdTitle>
          <BirdBody />
        </BirdColumn>
      </Workspace>

      <StatusRow>
        <StatusMessage>Press Ctrl with left mouse click to delete a point</StatusMessage>
        <ZoomBox>160%</ZoomBox>
        <ZoomButtons>
          <ZoomButton $w={31} $line>Fit</ZoomButton>
          <ZoomButton $w={50}>100%</ZoomButton>
        </ZoomButtons>
        <ZoomIconCell $inset={6}><MagnifierIcon /></ZoomIconCell>
        <SliderCell>
          <SliderLine />
          <SliderThumb />
        </SliderCell>
        <ZoomIconCell $inset={3}><MagnifierIcon plus /></ZoomIconCell>
      </StatusRow>

      <Taskbar>
        <Weather>
          <CloudSun />
          <WeatherText>
            <div>28°C</div>
            <div>Mostly cloudy</div>
          </WeatherText>
        </Weather>
        <StartCell><StartLogo /></StartCell>
        <SearchBox>
          <SearchGlass />
          Search
        </SearchBox>
        {TASK_ICONS.map((t) => (
          <TaskCell key={t.id} $dot={t.dot} $active={t.active}>
            {t.art}
          </TaskCell>
        ))}
        <Tray>
          <TrayIcon $w={40}>
            <svg width="16" height="10" fill="none" stroke="#222" strokeWidth="1.600"><path d="M1 9l7-7 7 7" /></svg>
          </TrayIcon>
          <TrayIcon $w={40}>
            <svg width="22" height="20" viewBox="0 0 22 20">
              <path d="M5 17a4 4 0 0 1-1-8 6 6 0 0 1 11-2 5 5 0 0 1 3 10z" fill="#777" stroke="#222" />
              <path d="M3 2l15 16" stroke="#222" strokeWidth="1.500" />
            </svg>
          </TrayIcon>
          <TrayStack $w={56} $align="center">
            <span>ENG</span>
            <span>IN</span>
          </TrayStack>
          <TrayIcon $w={36}>
            <svg width="22" height="22" viewBox="0 0 22 22" fill="none" stroke="#222">
              <circle cx="10" cy="10" r="9" />
              <ellipse cx="10" cy="10" rx="4" ry="9" />
              <path d="M1 10h18M2 5h16M2 15h16" />
              <circle cx="16" cy="16" r="5" fill="#f1eee3" />
              <path d="M13 19l6-6" />
            </svg>
          </TrayIcon>
          <TrayIcon $w={27}>
            <svg width="22" height="18" viewBox="0 0 22 18" fill="none" stroke="#222">
              <path d="M1 6h4l5-4v14l-5-4H1z" />
              <path d="M13 5c2 2 2 6 0 8M16 3c3 3 3 9 0 12M19 1c4 4 4 12 0 16" />
            </svg>
          </TrayIcon>
          <TrayIcon $w={34}>
            <svg width="22" height="16" viewBox="0 0 22 16">
              <rect x="0.500" y="3" width="18" height="11" rx="2" fill="none" stroke="#222" />
              <rect x="2" y="5" width="10" height="8" fill="#222" />
              <rect x="19.500" y="7" width="2" height="4" fill="#222" />
              <path d="M6 0L3 6h3l-1 4 4-6H6z" fill="#222" stroke="#f1eee3" strokeWidth=".5" />
            </svg>
          </TrayIcon>
          <TrayStack $w={90} $align="flex-end" $size={15}>
            <span>09:34</span>
            <span>23-08-2023</span>
          </TrayStack>
          <Badge>4</Badge>
        </Tray>
      </Taskbar>
    </Screen>
  );
}
